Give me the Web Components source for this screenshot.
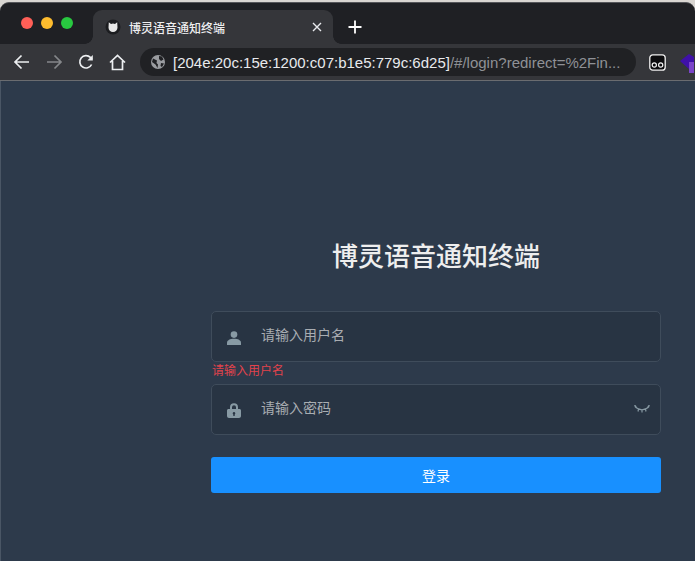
<!DOCTYPE html>
<html lang="zh">
<head>
<meta charset="utf-8">
<title>博灵语音通知终端</title>
<style>
  html, body { margin: 0; height: 100%; background: #2d3a4b; overflow: hidden; }
  body { font-family: "Liberation Sans", "Noto Sans CJK SC", sans-serif; display: flex; flex-direction: column; height: 561px; }
</style>
</head>
<body>
<browser-frame title-text="博灵语音通知终端"></browser-frame>
<login-page>
  <login-field placeholder="请输入用户名" error="请输入用户名" icon="user"></login-field>
  <login-field placeholder="请输入密码" icon="lock" eye></login-field>
</login-page>

<script>
// barra del navegador: pestañas y direcciones
class BrowserFrame extends HTMLElement {
  constructor() {
    super();
    this.attachShadow({ mode: 'open' });
  }

  connectedCallback() {
    const titulo = this.getAttribute('title-text');
    this.shadowRoot.innerHTML = `<style>
      :host { display: block; flex: none; height: 81px; background: #d9d6d2; color: #fff; }
      .win { height: 79px; margin-top: 2px; background: #1f2024; border-radius: 9px 9px 0 0; border-top: 1px solid #55565a; box-sizing: border-box; overflow: hidden; position: relative; }
      .tabs { display: flex; height: 41px; }
      .lights { display: flex; gap: 8px; padding: 14px 0 0 21px; width: 72px; flex: none; box-sizing: content-box; }
      .lights i { width: 12px; height: 12px; border-radius: 50%; }
      .tab { width: 240px; height: 34px; margin-top: 7px; background: #35363a; border-radius: 9px 9px 0 0; display: flex; align-items: center; box-sizing: border-box; padding: 0 11px 0 12px; position: relative; }
      .tab::before, .tab::after { content: ""; position: absolute; bottom: 0; width: 8px; height: 8px; }
      .tab::before { left: -8px; background: radial-gradient(circle at 0 0, #1f2024 7.5px, #35363a 8px); }
      .tab::after { right: -8px; background: radial-gradient(circle at 100% 0, #1f2024 7.5px, #35363a 8px); }
      .fav { width: 16px; height: 16px; flex: none; }
      .name { font: 500 12px "Noto Sans CJK SC", sans-serif; margin-left: 8px; flex: 1; color: #eeeef0; }
      .plus { margin: 17px 0 0 15px; width: 14px; height: 14px; }
      .bar { height: 37px; background: #35363a; display: flex; align-items: center; padding: 0 0 0 13px; border-bottom: 1px solid #6a6c70; box-sizing: border-box; }
      .bar svg { flex: none; }
      .url { margin-left: 14px; width: 496px; height: 28px; background: #202124; border-radius: 14px; display: flex; align-items: center; padding-left: 11px; box-sizing: border-box; flex: none; font-size: 15px; white-space: nowrap; }
      .url b { font-weight: 400; color: #e8eaed; margin-left: 8px; }
      .url span { color: #8f9196; }
      .ext { margin-left: 13px; }
      .ext2 { margin-left: 14px; }
    </style>
    <div class="win">
      <div class="tabs">
        <div class="lights">
          <i style="background:#ff5f57"></i><i style="background:#febc2e"></i><i style="background:#28c840"></i>
        </div>
        <div class="tab">
          <svg class="fav" viewBox="0 0 16 16">
            <circle cx="8" cy="8" r="7.500" fill="#1c1d20"/>
            <path d="M3.800 3.200 6 5a5 5 0 0 1 4 0l2.200-1.800.3 5.300a4.500 4.500 0 0 1-9 0z" fill="#e8e8e8"/>
          </svg>
          <span class="name">${titulo}</span>
          <svg width="10" height="10" viewBox="0 0 10 10"><path d="M1 1l8 8M9 1l-8 8" stroke="#e8eaed" stroke-width="1.400"/></svg>
        </div>
        <svg class="plus" viewBox="0 0 14 14"><path d="M7 .5v13M.5 7h13" stroke="#fff" stroke-width="1.800"/></svg>
      </div>
      <div class="bar">
        <svg width="17" height="16" viewBox="0 0 17 16" fill="none" stroke="#eceef0" stroke-width="1.700"><path d="M16 8H2M8.500 1.500 2 8l6.500 6.500"/></svg>
        <svg style="margin-left:16px" width="17" height="16" viewBox="0 0 17 16" fill="none" stroke="#85878a" stroke-width="1.700"><path d="M1 8h14M8.500 1.500 15 8l-6.500 6.500"/></svg>
        <svg style="margin-left:15px" width="16" height="16" viewBox="0 0 16 16" fill="none" stroke="#eceef0" stroke-width="1.700"><path d="M13.600 10.500A6.200 6.200 0 1 1 12.400 3.400L14 5"/><path d="M14.800 1v5.500H9.300z" fill="#eceef0" stroke="none"/></svg>
        <svg style="margin-left:15px" width="17" height="17" viewBox="0 0 17 17" fill="none" stroke="#eceef0" stroke-width="1.700"><path d="M1 8.500 8.500 1.500 16 8.500M3.500 7v8.500h10V7"/></svg>
        <div class="url">
          <svg width="14" height="14" viewBox="0 0 14 14"><circle cx="7" cy="7" r="7" fill="#9a9ca0"/><path d="M2 3.500 6 5.500 5.500 8 7 9.500 6.500 13 4.500 9.500 1 7zM8 1l3 .500 1.500 3L10 6 8 4zM10 8l3 .500L11 12l-1.500-1z" fill="#202124"/></svg>
          <b>[204e:20c:15e:1200:c07:b1e5:779c:6d25]</b><span>/#/login?redirect=%2Fin...</span>
        </div>
        <svg class="ext" width="17" height="17" viewBox="0 0 17 17"><rect x=".8" y=".8" width="15.400" height="15.400" rx="3" fill="#0c0c0e" stroke="#f2f2f2" stroke-width="1.300"/><circle cx="5.300" cy="11" r="2.100" fill="none" stroke="#f2f2f2" stroke-width="1.200"/><circle cx="11.700" cy="11" r="2.100" fill="none" stroke="#f2f2f2" stroke-width="1.200"/></svg>
        <svg class="ext2" width="14" height="22" viewBox="0 0 14 22"><path d="M0 10 9 3l5 3v10l-5 2z" fill="#3f10a8"/><rect x="9" y="11" width="5" height="12" fill="#7a44c8"/></svg>
      </div>
    </div>`;
  }
}

// un campo del formulario, con icono y mensaje de error
class LoginField extends HTMLElement {
  constructor() {
    super();
    this.attachShadow({ mode: 'open' });
  }

  connectedCallback() {
    const iconos = {
      user: '<svg width="14" height="14" viewBox="0 0 14 14" fill="#889aa4"><circle cx="7" cy="3.600" r="3.300"/><path d="M0 14v-2.200C0 9.300 3 7.800 7 7.800s7 1.500 7 4V14z"/></svg>',
      lock: '<svg width="14" height="15" viewBox="0 0 14 15" fill="#889aa4"><path fill-rule="evenodd" d="M3 6V4.200a4 4 0 0 1 8 0V6h1.500c.8 0 1.500.7 1.500 1.500V13c0 1.100-.9 2-2 2H2c-1.100 0-2-.9-2-2V7.500C0 6.700.7 6 1.500 6zM5 6h4V4.200a2 2 0 0 0-4 0zM7 9a1.300 1.300 0 0 0-.7 2.400V13h1.400v-1.600A1.300 1.300 0 0 0 7 9z"/></svg>'
    };
    const error = this.getAttribute('error');
    const ojo = this.hasAttribute('eye')
      ? '<svg class="eye" width="16" height="9" viewBox="0 0 16 9" fill="none" stroke="#889aa4" stroke-width="1.200"><path d="M.5 1.200C3 3.800 5.500 4.800 8 4.800s5-1 7.500-3.600M.5 0l1.800 1.800M15.500 0l-1.800 1.800M4.500 4.200 4 6.500M11.500 4.200 12 6.500M8 5v2.500"/></svg>'
      : '';
    this.shadowRoot.innerHTML = `<style>
      :host { display: block; }
      .box { height: 51px; box-sizing: border-box; border: 1px solid #3f4c5b; border-radius: 5px; background: #283443; display: flex; align-items: center; position: relative; }
      .icon { width: 14px; margin-left: 15px; display: flex; position: relative; top: 1px; }
      input { all: unset; flex: 1; margin-left: 20px; font: 14px "Noto Sans CJK SC", sans-serif; color: #fff; height: 41px; padding-bottom: 6px; }
      input::placeholder { color: #a9adb2; opacity: 1; }
      .eye { position: absolute; right: 10px; top: 20px; }
      .err { font: 12px/15px "Noto Sans CJK SC", sans-serif; color: #e2434c; padding: 0 0 0 1px; height: 22px; box-sizing: border-box; }
    </style>
    <div class="box">
      <span class="icon">${iconos[this.getAttribute('icon')]}</span>
      <input placeholder="${this.getAttribute('placeholder')}">
      ${ojo}
    </div>
    ${error ? `<div class="err">${error}</div>` : ''}`;
  }
}

// la tarjeta de acceso: titulo, campos por slot y boton
class LoginPage extends HTMLElement {
  constructor() {
    super();
    this.attachShadow({ mode: 'open' });
    this.shadowRoot.innerHTML = `<style>
      :host { display: flex; flex: 1; justify-content: flex-end; padding: 0 34px 0 0; background: #2d3a4b; border-left: 1px solid #4a5665; box-sizing: border-box; }
      form { width: 450px; padding-top: 154px; box-sizing: border-box; }
      h3 { margin: 0 0 36px; height: 40px; font: 500 26px/40px "Noto Sans CJK SC", sans-serif; color: #eee; text-align: center; }
      .fields { display: flex; flex-direction: column; }
      button { all: unset; display: block; width: 100%; height: 36px; margin-top: 22px; background: #1890ff; border-radius: 3px; color: #fff; text-align: center; font: 14px/36px "Noto Sans CJK SC", sans-serif; }
    </style>
    <form>
      <h3>博灵语音通知终端</h3>
      <div class="fields"><slot></slot></div>
      <button type="button">登录</button>
    </form>`;
  }
}

customElements.define('browser-frame', BrowserFrame);
customElements.define('login-field', LoginField);
customElements.define('login-page', LoginPage);
</script>
</body>
</html>
